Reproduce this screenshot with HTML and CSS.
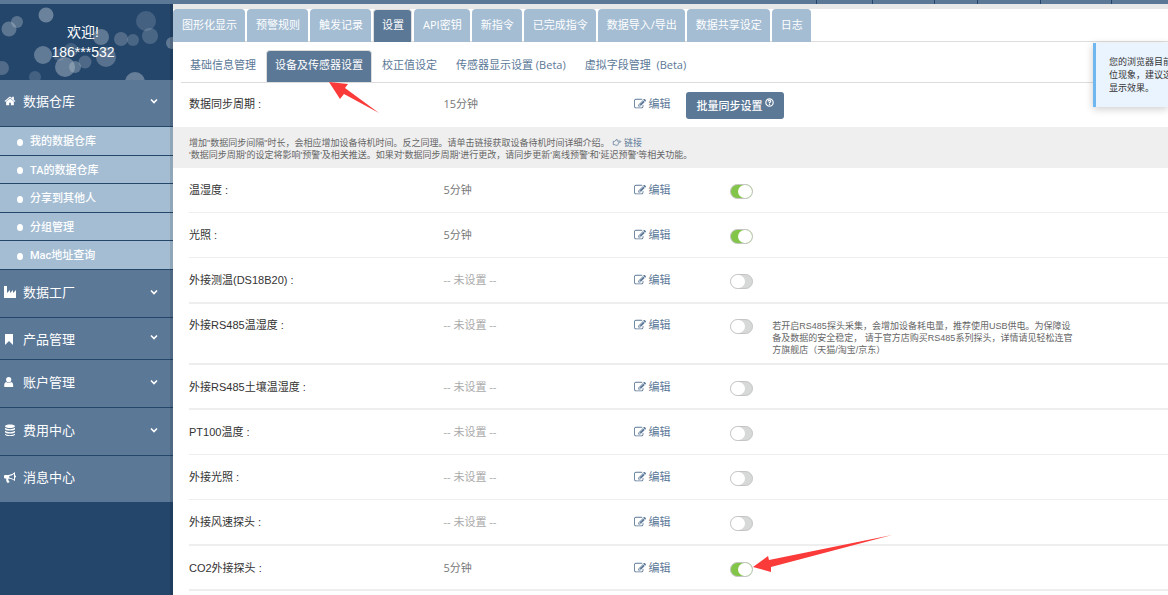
FILE: index.html
```html
<!DOCTYPE html>
<html lang="zh-CN">
<head>
<meta charset="utf-8">
<title>设备及传感器设置</title>
<link rel="stylesheet" href="styles.css">
</head>
<body>
<svg class="defs" aria-hidden="true">
  <symbol id="edit" viewBox="0 0 1792 1792"><path d="M888 1184l116-116-152-152-116 116v56h96v96h56zm440-720q-16-16-33 1l-350 350q-17 17-1 33t33-1l350-350q17-17 1-33zm80 594v190q0 119-84.5 203.5t-203.5 84.5h-832q-119 0-203.5-84.5t-84.5-203.5v-832q0-119 84.5-203.5t203.5-84.5h832q63 0 117 25 15 7 18 23 3 17-9 29l-49 49q-14 14-32 8-23-6-45-6h-832q-66 0-113 47t-47 113v832q0 66 47 113t113 47h832q66 0 113-47t47-113v-126q0-13 9-22l64-64q15-15 35-7t20 29zm-96-738l288 288-672 672h-288v-288zm444 132l-92 92-288-288 92-92q28-28 68-28t68 28l152 152q28 28 28 68t-28 68z"/></symbol>
  <symbol id="home" viewBox="0 0 1792 1792"><path d="M1472 992v480q0 26-19 45t-45 19h-384v-384h-256v384h-384q-26 0-45-19t-19-45v-480q0-1 .5-3t.5-3l575-474 575 474q1 2 1 6zm223-69l-62 74q-8 9-21 11h-3q-13 0-21-7l-692-577-692 577q-12 8-24 7-13-2-21-11l-62-74q-8-10-7-23.5t11-21.5l719-599q32-26 76-26t76 26l244 204v-195q0-14 9-23t23-9h192q14 0 23 9t9 23v408l219 182q10 8 11 21.5t-7 23.5z"/></symbol>
  <symbol id="factory" viewBox="0 0 12 12"><path d="M0 0h3v7l3-3v3l3-3v3l3-3v8H0z"/></symbol>
  <symbol id="bookmark" viewBox="0 0 12 12"><path d="M1 1h8v11L5 8l-4 4z"/></symbol>
  <symbol id="user" viewBox="0 0 12 12"><path d="M4.700 1a2.600 2.600 0 0 1 2.600 2.700C7.300 5.200 6.300 6.500 4.700 6.500S2.100 5.200 2.100 3.700A2.600 2.600 0 0 1 4.700 1zM2.200 6q2.500 1.800 5 0 2.100.5 2 4.200 0 .9-1 .9h-7q-1 0-1-.9Q.1 6.500 2.200 6z"/></symbol>
  <symbol id="coins" viewBox="0 0 12 12"><path d="M1 2.200C1-.2 11-.2 11 2.200S1 4.600 1 2.200zm0 1.600c2 1.800 8 1.800 10 0v1.300c0 2-10 2-10 0zm0 3c2 1.800 8 1.800 10 0v1.300c0 2-10 2-10 0zm0 3c2 1.800 8 1.800 10 0v.6c0 2.200-10 2.200-10 0z"/></symbol>
  <symbol id="horn" viewBox="0 0 12 12"><path fill-rule="evenodd" d="M11 1v3.300q1 .3 1 1.200t-1 1.200V10Q8 7.600 4.600 7.500q-.8 1 0 2 .2.900 1.200 1.500-1.200 1-2.900.4Q2 9.500 2.200 7.500H1q-1 0-1-1V5q0-1 1-1h3.500Q8 4 11 1zm-1 1.900Q7.700 4.700 5.300 5v1.700q2.400.2 4.700 1.800z"/></symbol>
  <symbol id="chevron" viewBox="0 0 8 6"><path d="M1 1.500l3 3 3-3" fill="none" stroke="currentColor" stroke-width="1.600"/></symbol>
  <symbol id="hand" viewBox="0 0 12 12"><path d="M1 4.500h2L5.200 2q1-.8 1.200.4L6 4h4.500q1.200.7 0 1.600H8.200q.8.900-.3 1.600.4 1-.6 1.500 0 1-1 1H4.500L3 8.900H1z" fill="none" stroke="currentColor"/></symbol>
  <symbol id="help" viewBox="0 0 10 10"><circle cx="5" cy="5" r="4.100" fill="none" stroke="currentColor" stroke-width="1.300"/><path d="M3.600 4q0-1.400 1.400-1.400T6.400 3.900Q6.300 4.700 5 5v1M5 6.700v1" fill="none" stroke="currentColor" stroke-width="1.400"/></symbol>
</svg>

<header class="topbar"><i class="w56"></i><i class="w62"></i><i class="w43"></i><i class="w63"></i><i class="w71"></i><i class="w57"></i></header>

<div class="layout">
  <aside class="sidebar">
    <div class="welcome">
      <svg class="bokeh" viewBox="0 0 173 76" preserveAspectRatio="xMidYMid slice" aria-hidden="true">
        <g fill="#b8c4d0">
          <circle cx="46" cy="11" r="7.500" opacity=".48"/><circle cx="9" cy="25" r="7.500" opacity=".38"/><circle cx="17" cy="18" r="6" opacity=".36"/>
          <circle cx="43" cy="51" r="9" opacity=".42"/><circle cx="71" cy="46" r="7" opacity=".2"/><circle cx="59" cy="51" r="6" opacity=".18"/>
          <circle cx="65" cy="63" r="10" opacity=".45"/><circle cx="75" cy="63" r="6" opacity=".38"/><circle cx="85" cy="58" r="6.500" opacity=".28"/>
          <circle cx="101" cy="33" r="8" opacity=".4"/><circle cx="106" cy="53" r="10" opacity=".35"/><circle cx="121" cy="35" r="7" opacity=".3"/>
          <circle cx="133" cy="36" r="6" opacity=".26"/><circle cx="146" cy="17" r="10" opacity=".22"/><circle cx="150" cy="32" r="8" opacity=".26"/>
          <circle cx="172" cy="39" r="6" opacity=".4"/><circle cx="135" cy="78" r="10" opacity=".45"/><circle cx="35" cy="73" r="6" opacity=".22"/><circle cx="2" cy="64" r="7" opacity=".3"/>
        </g>
      </svg>
      <p>欢迎!</p><p>186***532</p>
    </div>
    <nav class="menu">
      <a class="item" href="#"><svg class="ico"><use href="#home"/></svg><span>数据仓库</span><svg class="chev"><use href="#chevron"/></svg></a>
      <div class="submenu">
        <a href="#">我的数据仓库</a><a href="#">TA的数据仓库</a><a href="#">分享到其他人</a><a href="#">分组管理</a><a href="#">Mac地址查询</a>
      </div>
      <a class="item" href="#"><svg class="ico"><use href="#factory"/></svg><span>数据工厂</span><svg class="chev"><use href="#chevron"/></svg></a>
      <a class="item item-short" href="#"><svg class="ico"><use href="#bookmark"/></svg><span>产品管理</span><svg class="chev"><use href="#chevron"/></svg></a>
      <a class="item" href="#"><svg class="ico"><use href="#user"/></svg><span>账户管理</span><svg class="chev"><use href="#chevron"/></svg></a>
      <a class="item" href="#"><svg class="ico"><use href="#coins"/></svg><span>费用中心</span><svg class="chev"><use href="#chevron"/></svg></a>
      <a class="item item-last" href="#"><svg class="ico"><use href="#horn"/></svg><span>消息中心</span></a>
    </nav>
  </aside>

  <main class="content">
    <nav class="tabs">
      <a href="#">图形化显示</a><a href="#">预警规则</a><a href="#">触发记录</a><a href="#" class="active">设置</a><a href="#">API密钥</a><a href="#">新指令</a><a href="#">已完成指令</a><a href="#">数据导入/导出</a><a href="#">数据共享设定</a><a href="#">日志</a>
    </nav>
    <nav class="subtabs">
      <a href="#">基础信息管理</a><a href="#" class="active">设备及传感器设置</a><a href="#">校正值设定</a><a href="#">传感器显示设置 (Beta)</a><a href="#">虚拟字段管理&nbsp; (Beta)</a>
    </nav>

    <section class="row sync">
      <span class="label">数据同步周期 :</span><span class="value">15分钟</span>
      <a class="edit" href="#"><svg><use href="#edit"/></svg>编辑</a>
      <button class="batch" type="button">批量同步设置<svg><use href="#help"/></svg></button>
    </section>

    <div class="tip">
      <p>增加"数据同步间隔"时长，会相应增加设备待机时间。反之同理。请单击链接获取设备待机时间详细介绍。 <a href="#"><svg><use href="#hand"/></svg>链接</a></p>
      <p>'数据同步周期'的设定将影响'预警'及相关推送。如果对'数据同步周期'进行更改，请同步更新'离线预警'和'延迟预警'等相关功能。</p>
    </div>

    <section class="row"><label class="label" for="s1">温湿度 :</label><span class="value">5分钟</span><a class="edit" href="#"><svg><use href="#edit"/></svg>编辑</a><input class="switch" id="s1" type="checkbox" checked></section>
    <section class="row"><label class="label" for="s2">光照 :</label><span class="value">5分钟</span><a class="edit" href="#"><svg><use href="#edit"/></svg>编辑</a><input class="switch" id="s2" type="checkbox" checked></section>
    <section class="row thick tall"><label class="label" for="s3">外接测温(DS18B20) :</label><span class="value unset">-- 未设置 --</span><a class="edit" href="#"><svg><use href="#edit"/></svg>编辑</a><input class="switch" id="s3" type="checkbox"></section>
    <section class="row thick noted"><label class="label" for="s4">外接RS485温湿度 :</label><span class="value unset">-- 未设置 --</span><a class="edit" href="#"><svg><use href="#edit"/></svg>编辑</a><input class="switch" id="s4" type="checkbox"><p class="note">若开启RS485探头采集，会增加设备耗电量，推荐使用USB供电。为保障设<br>备及数据的安全稳定， 请于官方店购买RS485系列探头，详情请见轻松连官<br>方旗舰店（天猫/淘宝/京东）</p></section>
    <section class="row thick"><label class="label" for="s5">外接RS485土壤温湿度 :</label><span class="value unset">-- 未设置 --</span><a class="edit" href="#"><svg><use href="#edit"/></svg>编辑</a><input class="switch" id="s5" type="checkbox"></section>
    <section class="row"><label class="label" for="s6">PT100温度 :</label><span class="value unset">-- 未设置 --</span><a class="edit" href="#"><svg><use href="#edit"/></svg>编辑</a><input class="switch" id="s6" type="checkbox"></section>
    <section class="row"><label class="label" for="s7">外接光照 :</label><span class="value unset">-- 未设置 --</span><a class="edit" href="#"><svg><use href="#edit"/></svg>编辑</a><input class="switch" id="s7" type="checkbox"></section>
    <section class="row thick tall"><label class="label" for="s8">外接风速探头 :</label><span class="value unset">-- 未设置 --</span><a class="edit" href="#"><svg><use href="#edit"/></svg>编辑</a><input class="switch" id="s8" type="checkbox"></section>
    <section class="row thick"><label class="label" for="s9">CO2外接探头 :</label><span class="value">5分钟</span><a class="edit" href="#"><svg><use href="#edit"/></svg>编辑</a><input class="switch" id="s9" type="checkbox" checked></section>
  </main>
</div>

<div class="notice" role="status">您的浏览器目前<br>位现象，建议选<br>显示效果。</div>

<svg class="arrow arrow-tab" viewBox="0 0 52 32" aria-hidden="true"><path d="M1 1l19 2-3 4 34 25-35-19-4 5z"/></svg>
<svg class="arrow arrow-switch" viewBox="0 0 140 38" aria-hidden="true"><path d="M0 32l15-11 1 4L139 0 18 32v5z"/></svg>
</body>
</html>
```
FILE: styles.css
```css
* { box-sizing: border-box; }

html { overflow: hidden; }

body {
  margin: 0;
  position: relative;
  min-height: 100vh;
  overflow: hidden;
  background: #fff;
  color: #333;
  font: 11px/16px "Open Sans", "Noto Sans CJK SC", sans-serif;
}

p { margin: 0; }
a { color: #5b7897; text-decoration: none; }
svg { fill: currentColor; flex: none; }
.defs { position: absolute; width: 0; height: 0; }

.topbar {
  display: flex;
  justify-content: flex-end;
  height: 4px;
  background: #5b7897;
}
.topbar i { border-left: 1px solid #24466b; }
.w43 { width: 43px; }
.w56 { width: 56px; }
.w57 { width: 57px; }
.w62 { width: 62px; }
.w63 { width: 63px; }
.w71 { width: 71px; }

.layout { display: flex; min-height: calc(100vh - 4px); }

/* Sidebar */
.sidebar {
  position: relative;
  flex: 0 0 173px;
  background: #24466b;
  color: #fff;
}
.sidebar::after {
  content: "";
  position: absolute;
  inset: 0 0 0 auto;
  width: 3px;
  background: rgba(0, 0, 0, .12);
}
.welcome {
  position: relative;
  height: 76px;
  padding: 18px 7px 0 0;
  font: 14px/20px "Liberation Sans", "Noto Sans CJK SC", sans-serif;
  text-align: center;
}
.welcome p { position: relative; }
.bokeh { position: absolute; inset: 0; width: 100%; height: 100%; }

.menu a { color: #fff; }
.item {
  display: flex;
  align-items: center;
  height: 48px;
  padding: 0 15px 4px 4px;
  background: #5b7897;
  border-bottom: 1px solid #24466b;
  font-size: 13px;
}
.item:first-child { height: 47px; }
.item span { flex: 1; margin-left: 7px; }
.item-short { height: 42px; padding-bottom: 0; }
.item-short .chev { margin-bottom: 4px; }
.item-last { height: 46px; border-bottom: 0; }
.ico { width: 12px; height: 12px; }
.chev { width: 8px; height: 6px; }

.submenu a {
  display: flex;
  align-items: center;
  height: 29px;
  padding: 2px 0 0 17px;
  background: #a4bdd3;
  border-bottom: 1px solid #24466b;
  font-family: Roboto, "Noto Sans CJK SC", sans-serif;
  font-weight: 500;
}
.submenu a:nth-child(even) { height: 28px; }
.submenu a::before {
  content: "";
  width: 6px;
  height: 7px;
  margin-right: 7px;
  border-radius: 50%;
  background: #fff;
}

/* Tabs */
.content { flex: 1; min-width: 0; border-top: 5px solid #e8e8e8; }
.tabs {
  display: flex;
  gap: 2px;
  height: 33px;
  border-bottom: 1px solid #ddd;
}
.tabs a {
  height: 33px;
  padding: 0 8px 0 9px;
  border-radius: 4px 4px 0 0;
  background: #a4bdd3;
  color: #fff;
  line-height: 32px;
  white-space: nowrap;
}
.tabs .active {
  padding: 0 7px 0 8px;
  border: 1px solid #ddd;
  border-bottom: 0;
  background: #5b7897;
  line-height: 30px;
}
.subtabs {
  display: flex;
  gap: 1px;
  margin: 8px 0 0 8px;
  border-bottom: 1px solid #ddd;
}
.subtabs a {
  height: 32px;
  padding: 0 8px;
  border: 1px solid transparent;
  border-bottom: 0;
  border-radius: 4px 4px 0 0;
  line-height: 28px;
  white-space: nowrap;
}
.subtabs .active { background: #5b7897; border-color: #ddd; color: #fff; }

/* Settings rows */
.row {
  display: grid;
  grid-template-columns: 26% 19.5% 9.8% 42px 1fr;
  align-items: start;
  min-height: 45px;
  margin-left: 16px;
  padding-top: 14px;
  border-bottom: 1px solid #eee;
}
.thick { border-bottom-width: 2px; }
.tall { min-height: 46px; }
.noted { min-height: 61px; padding-top: 13px; }
.sync {
  grid-template-columns: 26% 19.5% 52px auto;
  justify-content: start;
  min-height: 44px;
  padding-top: 13px;
  border-bottom: 0;
}
.label { font-family: "Liberation Sans", "Noto Sans CJK SC", sans-serif; }
.value { color: #777; }
.unset { color: #aaa; }
.edit { display: flex; align-items: center; gap: 2px; }
.edit svg { width: 12px; height: 12px; }

.batch {
  display: flex;
  align-items: center;
  gap: 3px;
  height: 27px;
  margin-top: -4px;
  padding: 0 10px;
  border: 0;
  border-radius: 3px;
  background: #5b7897;
  color: #fff;
  font: inherit;
  font-weight: 500;
}
.batch svg { width: 9px; height: 9px; margin-bottom: 6px; }

.switch {
  appearance: none;
  position: relative;
  width: 23px;
  height: 15px;
  margin: 2px 0 0;
  border: 1px solid #c4c4c4;
  border-radius: 8px;
  background: #d7d9d8;
}
.switch::before {
  content: "";
  position: absolute;
  inset: 0 auto 0 0;
  width: 14px;
  border-radius: 7px;
  background: #fff;
}
.switch:checked { background: #82c548; }
.switch:checked::before { inset: 0 0 0 auto; }

.note, .tip {
  color: #666;
  font: 9px/12px "Liberation Sans", "Noto Sans CJK SC", sans-serif;
}
.note { margin-top: 3px; }
.tip { padding: 10px 16px 7px; background: #efefef; }
.tip svg { width: 10px; height: 9px; margin-right: 2px; vertical-align: -1px; }

/* Overlays */
.notice {
  position: absolute;
  top: 43px;
  right: 0;
  width: 75px;
  padding: 13px 0 12px 13px;
  overflow: hidden;
  border-left: 3px solid #70b7f0;
  background: #eaf4fe;
  box-shadow: 0 2px 8px rgba(0, 0, 0, .2);
  font: 9px/13px "Liberation Sans", "Noto Sans CJK SC", sans-serif;
  white-space: nowrap;
}
.arrow { position: absolute; fill: #fb3b3a; }
.arrow-tab { left: 328px; top: 81px; width: 52px; height: 32px; }
.arrow-switch { left: 753px; top: 535px; width: 140px; height: 38px; }
```
